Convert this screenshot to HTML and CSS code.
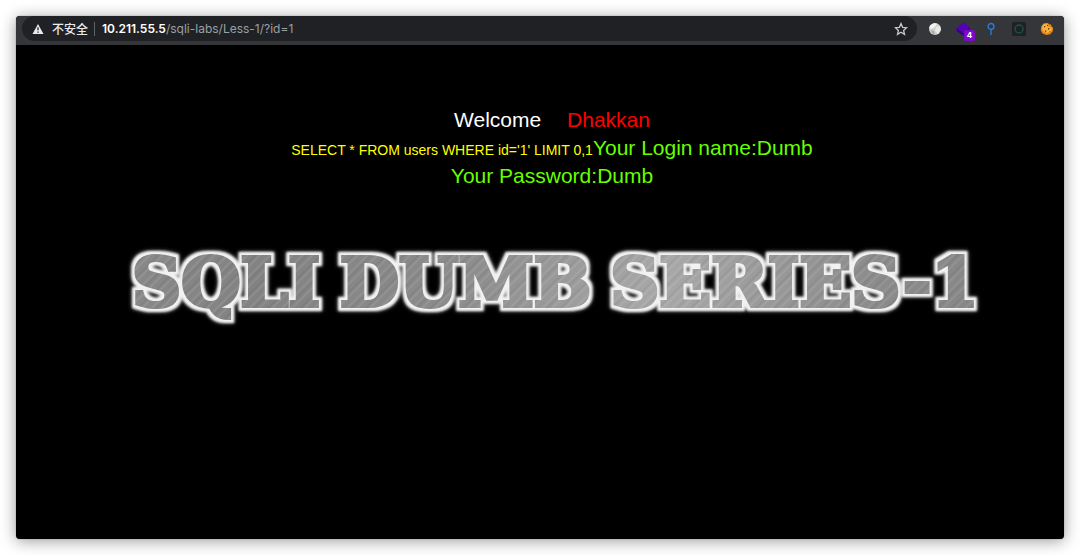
FILE: index.html
```html
<!DOCTYPE html>
<html lang="zh-CN">
<head>
<meta charset="utf-8">
<title>Less-1</title>
<link rel="stylesheet" href="styles.css">
</head>
<body>
<div class="window">
  <header class="toolbar">
    <div class="omnibox">
      <button class="security" type="button">
        <svg class="warning" viewBox="0 0 12 12" aria-hidden="true"><path d="M6 1 11.5 11H.5Z" fill="#e8eaed"/><path d="M6 4.3v3M6 8.4v1.4" stroke="#202124" stroke-width="1.3"/></svg>
        不安全
      </button>
      <span class="divider"></span>
      <a class="url" href="#"><span class="host">10.211.55.5</span>/sqli-labs/Less-1/?id=1</a>
      <button class="icon star" type="button" aria-label="Bookmark">
        <svg viewBox="0 0 14 14"><path d="m7 1.600 1.600 3.700 4 .4-3 2.700.9 4L7 10.300l-3.500 2.100.9-4-3-2.700 4-.4Z" fill="none" stroke="#c4c7cb" stroke-width="1.300" stroke-linejoin="miter"/></svg>
      </button>
    </div>
    <nav class="extensions" aria-label="Extensions">
      <button class="icon" type="button" aria-label="Globe">
        <svg viewBox="0 0 14 14"><circle cx="7" cy="7" r="6" fill="#cfcfcc"/><path d="M2 3.500 6 1.200l3 .6-2 3L3.600 7 1.300 6Z" fill="#f4f4f2"/><path d="m8 5 4-1 .8 4-2.800 4-3-3Z" fill="#e9e9e6"/><path d="m3 8 3 1 1 3.600-3-1Z" fill="#aaa"/></svg>
      </button>
      <button class="icon" type="button" aria-label="Layers, 4">
        <svg class="layers" viewBox="1 0 13 14"><path d="m1 6 7 5 6-6v3l-6 6-7-5Z" fill="#35008d"/><path d="m8 0 6 5-6 6-7-5Z" fill="#5600b5"/></svg>
        <span class="badge">4</span>
      </button>
      <button class="icon" type="button" aria-label="Pin">
        <svg viewBox="0 0 14 14"><circle cx="7" cy="4.400" r="2.900" fill="none" stroke="#287dd2" stroke-width="1.400"/><path d="M7 7.300V13" stroke="#287dd2" stroke-width="1.400"/></svg>
      </button>
      <button class="icon" type="button" aria-label="Ring">
        <svg viewBox="0 0 14 14"><rect width="14" height="14" rx="1.500" fill="#202124"/><circle cx="7" cy="7" r="4" fill="none" stroke="#195541" stroke-width="1.300"/></svg>
      </button>
      <button class="icon" type="button" aria-label="Cookie">
        <svg viewBox="0 0 14 14"><path d="M4 1.200 8 .9l1 1.400 2 .1.500 2L13 5.600l-.2 3.700-2.600 3-4 .8L2.300 11.200.8 8 1.400 4Z" fill="#e98a16"/><path d="m4 2 3 .2 2 2.800 3 1-1 3.600-4 1.400-4-2L2 5Z" fill="#fbb23c"/><path d="M4 4h1.300v1.300H4zM8 6h1.400v1.400H8zM5 8.500h1.300v1.300H5zM9.500 9.300h1v1h-1zM7 3h1v1H7z" fill="#75370c"/></svg>
      </button>
    </nav>
  </header>
  <main class="page">
    <section class="message">
      <p class="welcome">Welcome <span class="name">Dhakkan</span></p>
      <p><code class="query">SELECT * FROM users WHERE id='1' LIMIT 0,1</code>Your Login name:Dumb</p>
      <p>Your Password:Dumb</p>
    </section>
    <h1 class="banner">
      <svg class="banner-art" viewBox="0 0 870 90" role="img" aria-label="SQLI DUMB SERIES-1">
        <defs>
          <linearGradient id="steel" x1="150" y1="0" x2="530" y2="100" gradientUnits="userSpaceOnUse" spreadMethod="reflect">
            <stop offset="0" stop-color="#828282"/>
            <stop offset=".5" stop-color="#8c8c8c"/>
            <stop offset="1" stop-color="#a8a8a8"/>
          </linearGradient>
          <pattern id="scratches" width="23" height="23" patternUnits="userSpaceOnUse" patternTransform="rotate(45)">
            <path d="M1 0v23M8 0v23M17 0v23" stroke="#fff" stroke-opacity=".16"/>
            <path d="M4 0v23M14 0v23" stroke="#000" stroke-opacity=".09"/>
          </pattern>
          <pattern id="brushed" width="870" height="90" patternUnits="userSpaceOnUse">
            <rect width="870" height="90" fill="url(#steel)"/>
            <rect width="870" height="90" fill="url(#scratches)"/>
          </pattern>
          <filter id="glow" x="-20" y="-10" width="910" height="110" filterUnits="userSpaceOnUse" color-interpolation-filters="sRGB">
            <feMorphology in="SourceAlpha" operator="dilate" radius="3" result="edge"/>
            <feGaussianBlur in="edge" stdDeviation="1" result="softEdge"/>
            <feFlood flood-color="#f2f2f2"/>
            <feComposite in2="softEdge" operator="in" result="rim"/>
            <feGaussianBlur in="edge" stdDeviation="2" result="halo"/>
            <feFlood flood-color="#fff" flood-opacity=".6"/>
            <feComposite in2="halo" operator="in" result="light"/>
            <feMerge><feMergeNode in="light"/><feMergeNode in="rim"/><feMergeNode in="SourceGraphic"/></feMerge>
          </filter>
        </defs>
        <g class="banner-text" filter="url(#glow)">
          <text x="15" y="62">SQLI</text>
          <text x="223" y="62">DUMB</text>
          <text x="493" y="62">SERIES-1</text>
        </g>
      </svg>
    </h1>
  </main>
</div>
</body>
</html>
```
FILE: styles.css
```css
* {
  box-sizing: border-box;
}

body {
  margin: 0;
  min-height: 100vh;
  padding: 16px;
  display: flex;
  background: #fff;
  font-family: Inter, "Noto Sans CJK SC", sans-serif;
}

.window {
  flex: 1;
  display: flex;
  flex-direction: column;
  overflow: hidden;
  border-radius: 4px;
  background: #000;
  box-shadow: 0 0 1px #555, 0 2px 16px rgba(0, 0, 0, .4);
}

.toolbar {
  display: flex;
  align-items: center;
  height: 29px;
  padding: 0 10px 4px 6px;
  gap: 11px;
  background: #35363a;
}

.omnibox {
  flex: 1;
  display: flex;
  align-items: center;
  height: 25px;
  padding: 0 9px 0 10px;
  border-radius: 13px;
  background: #202124;
  font-size: 12px;
}

button {
  padding: 0;
  border: 0;
  background: none;
  color: inherit;
  font: inherit;
}

.security {
  display: flex;
  align-items: center;
  gap: 8px;
  color: #e8eaed;
  font-weight: 500;
}

.warning {
  width: 12px;
  height: 12px;
}

.divider {
  width: 1px;
  height: 14px;
  margin: 0 7px 0 6px;
  background: #5f6368;
}

.url {
  color: #9aa0a6;
  text-decoration: none;
}

.host {
  color: #fff;
  font-weight: 600;
}

.icon {
  position: relative;
  display: flex;
  width: 14px;
  height: 14px;
}

.icon svg {
  width: 100%;
  height: 100%;
}

.star {
  margin-left: auto;
}

.extensions {
  display: flex;
  gap: 14px;
}

.badge {
  position: absolute;
  left: 8px;
  top: 8px;
  width: 11px;
  height: 11px;
  border-radius: 2px;
  background: #7c0bc7;
  color: #fff;
  font-size: 8px;
  font-weight: 700;
  line-height: 11px;
  text-align: center;
}

.page {
  padding: 61px 0 0 24px;
}

.message {
  color: #6f0;
  font-family: "Liberation Sans", Arial, sans-serif;
  font-size: 21px;
  line-height: 28px;
  text-align: center;
}

.message p {
  margin: 0;
}

.message .welcome {
  color: #fff;
}

.name {
  margin-left: 20px;
  color: #f00;
}

.query {
  color: #ff0;
  font-family: inherit;
  font-size: 14px;
  line-height: 1;
}

.banner {
  display: flex;
  justify-content: center;
  margin: 54px 0 0;
}

.banner-art {
  width: 85%;
  overflow: visible;
}

.banner-text {
  fill: url(#brushed);
  stroke: url(#brushed);
  stroke-width: 4px;
  font-family: "DejaVu Serif", serif;
  font-size: 68px;
  font-weight: 700;
}
```
